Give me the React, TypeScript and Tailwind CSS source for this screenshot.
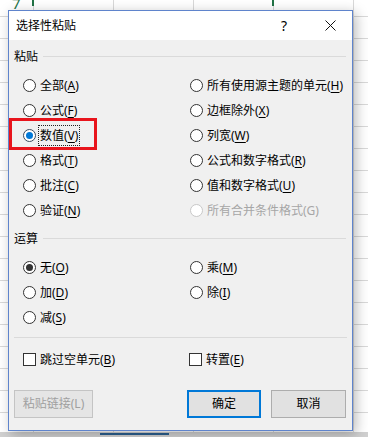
import type { ReactNode } from "react";

const font = "font-['Noto_Sans','Noto_Sans_CJK_SC',sans-serif]";

function Key({ k }: { k: string }) {
  return <span className="underline underline-offset-2 decoration-1">{k}</span>;
}

function Radio({
  checked,
  dot = "bg-[#333]",
  disabled,
  children,
}: {
  checked?: boolean;
  dot?: string;
  disabled?: boolean;
  children: ReactNode;
}) {
  return (
    <div className="flex items-center h-[25px]">
      <span
        className={`shrink-0 w-[13px] h-[13px] rounded-full border bg-white flex items-center justify-center ${
          disabled ? "border-[#c8c8c8]" : "border-[#333]"
        }`}
      >
        {checked && <span className={`w-[7px] h-[7px] rounded-full ${dot}`} />}
      </span>
      <span className={`ml-[4px] text-[12px] leading-[16px] whitespace-nowrap ${disabled ? "text-[#a6a6a6]" : "text-black"}`}>
        {children}
      </span>
    </div>
  );
}

function Check({ children }: { children: ReactNode }) {
  return (
    <div className="flex items-center h-[25px]">
      <span className="shrink-0 w-[13px] h-[13px] border border-[#333] bg-white" />
      <span className="ml-[4px] text-[12px] leading-[16px] text-black whitespace-nowrap">{children}</span>
    </div>
  );
}

function Section({ title }: { title: string }) {
  return (
    <div className="flex items-center h-[17px] pl-[5px] pr-[6px]">
      <span className="text-[12px] leading-[17px] text-black">{title}</span>
      <span className="flex-1 h-px bg-[#dadada] ml-[5px]" />
    </div>
  );
}

export default function App() {
  return (
    <div
      className={`relative w-[368px] h-[437px] overflow-hidden bg-white ${font} bg-[linear-gradient(to_bottom,transparent_21px,#d9d9d9_21px),linear-gradient(to_right,transparent_79px,#d9d9d9_79px)] bg-[length:80px_22px] bg-[position:34px_17px]`}
    >
      {/* sheet bits behind the dialog */}
      <span className="absolute left-[12px] top-[-8px] text-[15px] text-[#217346]">7</span>
      <span className="absolute left-[32px] top-0 w-[2px] h-[6px] bg-[#217346]" />
      <span className="absolute left-[272px] top-0 w-[2px] h-[6px] bg-[#217346]" />
      <div className="absolute left-0 right-0 bottom-0 h-[5px] bg-[#d0d0d0]">
        <div className="ml-[100px] w-[69px] h-[2px] mt-[1px] bg-[#2b5f8f]" />
      </div>

      {/* dialog */}
      <div className="absolute left-[8px] top-[10px] w-[345px] h-[421px] border border-[#5f84cc] bg-[#f0f0f0] shadow-[3px_3px_12px_rgba(0,0,0,0.28)] flex flex-col">
        <div className="h-[29px] bg-white flex items-center pl-[7px]">
          <span className="text-[12px] leading-[16px] text-black">选择性粘贴</span>
          <span className="ml-auto w-[20px] text-center text-[14px] leading-[16px] text-black">?</span>
          <span className="ml-[24px] mr-[10px] w-[24px] h-[16px] flex items-center justify-center">
            <svg width="11" height="11" viewBox="0 0 11 11">
              <path d="M0.5 0.5 L10.5 10.5 M10.5 0.5 L0.5 10.5" stroke="#111" strokeWidth="1" fill="none" />
            </svg>
          </span>
        </div>

        <div className="pt-[8px]">
          <Section title="粘贴" />
          <div className="grid grid-cols-[167px_1fr] pl-[14px] mt-[8px]">
            <div className="flex flex-col">
              <Radio>全部(<Key k="A" />)</Radio>
              <Radio>公式(<Key k="F" />)</Radio>
              <div className="relative">
                <div className="absolute left-[-14px] top-[-5px] w-[88px] h-[32px] border-[3px] border-[#e8141c]" />
                <div className="flex items-center h-[25px]">
                  <span className="shrink-0 w-[13px] h-[13px] rounded-full border border-[#3c4a5c] bg-white flex items-center justify-center">
                    <span className="w-[7px] h-[7px] rounded-full bg-[#0078d7]" />
                  </span>
                  <span className="ml-[2px] px-[1px] h-[21px] flex items-center border border-dotted border-[#222] text-[12px] leading-[16px] text-black whitespace-nowrap">
                    数值(<Key k="V" />)
                  </span>
                </div>
              </div>
              <Radio>格式(<Key k="T" />)</Radio>
              <Radio>批注(<Key k="C" />)</Radio>
              <Radio>验证(<Key k="N" />)</Radio>
            </div>
            <div className="flex flex-col">
              <Radio>所有使用源主题的单元(<Key k="H" />)</Radio>
              <Radio>边框除外(<Key k="X" />)</Radio>
              <Radio>列宽(<Key k="W" />)</Radio>
              <Radio>公式和数字格式(<Key k="R" />)</Radio>
              <Radio>值和数字格式(<Key k="U" />)</Radio>
              <Radio disabled>所有合并条件格式(G)</Radio>
            </div>
          </div>
        </div>

        <div className="mt-[7px]">
          <Section title="运算" />
          <div className="grid grid-cols-[167px_1fr] pl-[14px] mt-[8px]">
            <div className="flex flex-col">
              <Radio checked>无(<Key k="O" />)</Radio>
              <Radio>加(<Key k="D" />)</Radio>
              <Radio>减(<Key k="S" />)</Radio>
            </div>
            <div className="flex flex-col">
              <Radio>乘(<Key k="M" />)</Radio>
              <Radio>除(<Key k="I" />)</Radio>
            </div>
          </div>
        </div>

        <div className="mt-[7px] mx-[5px] h-px bg-[#dadada]" />

        <div className="grid grid-cols-[166px_1fr] pl-[14px] mt-[9px]">
          <Check>跳过空单元(<Key k="B" />)</Check>
          <Check>转置(<Key k="E" />)</Check>
        </div>

        <div className="flex items-center mt-[18px] pl-[5px] pr-[6px]">
          <button className="w-[79px] h-[28px] border border-[#c4c4c4] bg-[#e5e5e5] text-[12px] text-[#a0a0a0]">
            粘贴链接(L)
          </button>
          <button className="ml-auto w-[74px] h-[28px] border-2 border-[#0078d7] bg-[#e1e1e1] text-[12px] text-black">
            确定
          </button>
          <button className="ml-[10px] w-[75px] h-[28px] border border-[#adadad] bg-[#e1e1e1] text-[12px] text-black">
            取消
          </button>
        </div>
      </div>
    </div>
  );
}
